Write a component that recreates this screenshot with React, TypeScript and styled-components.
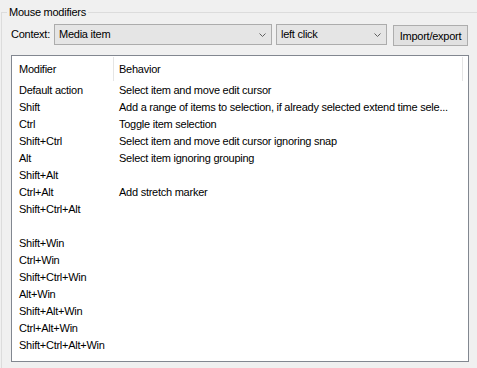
import React from "react";
import styled, { createGlobalStyle } from "styled-components";

const GlobalStyle = createGlobalStyle`
  html, body {
    margin: 0;
    padding: 0;
    background: #f0f0f0;
  }
  body {
    width: 477px;
    height: 368px;
    overflow: hidden;
    font-family: "Liberation Sans", Arial, sans-serif;
    font-size: 11px;
    letter-spacing: -0.25px;
    color: #000;
  }
`;

const Group = styled.fieldset`
  margin: 6px 0 0 1px;
  padding: 5px 0 0 9px;
  width: 476px;
  height: 362px;
  border: 1px solid #dcdcdc;
  border-right: none;
  border-bottom: none;
  box-sizing: border-box;
  min-width: 0;
`;

const Legend = styled.legend`
  margin-left: -4px;
  padding: 0 2px;
  line-height: 13px;
`;

const Toolbar = styled.div`
  display: flex;
  align-items: flex-start;
  height: 21px;
`;

const Label = styled.span`
  width: 43px;
  line-height: 21px;
`;

const Select = styled.div<{ $width: number; $gap?: number }>`
  display: flex;
  align-items: center;
  justify-content: space-between;
  box-sizing: border-box;
  width: ${(p) => p.$width}px;
  height: 21px;
  margin-right: ${(p) => p.$gap ?? 0}px;
  padding: 0 5px 0 4px;
  background: #e5e5e5;
  border: 1px solid #acacac;
  line-height: 19px;
`;

const Button = styled.button`
  box-sizing: border-box;
  width: 75px;
  height: 21px;
  margin-top: 1px;
  padding: 0;
  background: #e1e1e1;
  border: 1px solid #adadad;
  font: inherit;
  letter-spacing: inherit;
  color: #000;
`;

const List = styled.div`
  box-sizing: border-box;
  width: 458px;
  height: 307px;
  margin-top: 10px;
  background: #fff;
  border: 1px solid #828790;
  overflow: hidden;
`;

const HeaderRow = styled.div`
  display: flex;
  padding: 1px 0;
`;

const HeaderCell = styled.div<{ $width: number; $pad: number }>`
  box-sizing: border-box;
  width: ${(p) => p.$width}px;
  padding-left: ${(p) => p.$pad}px;
  height: 24px;
  line-height: 24px;
  border-right: 1px solid #e5e5e5;
`;

const Row = styled.div`
  display: flex;
  height: 17px;
  line-height: 17px;
  white-space: nowrap;
`;

const Cell = styled.div<{ $width: number; $pad: number }>`
  box-sizing: border-box;
  width: ${(p) => p.$width}px;
  padding-left: ${(p) => p.$pad}px;
  overflow: hidden;
`;

const Chevron = () => (
  <svg width="7" height="4" viewBox="0 0 7 4">
    <polyline
      points="0.5,0.5 3.5,3.5 6.5,0.5"
      fill="none"
      stroke="#606060"
      strokeWidth="1"
    />
  </svg>
);

const rows: [string, string][] = [
  ["Default action", "Select item and move edit cursor"],
  ["Shift", "Add a range of items to selection, if already selected extend time sele..."],
  ["Ctrl", "Toggle item selection"],
  ["Shift+Ctrl", "Select item and move edit cursor ignoring snap"],
  ["Alt", "Select item ignoring grouping"],
  ["Shift+Alt", ""],
  ["Ctrl+Alt", "Add stretch marker"],
  ["Shift+Ctrl+Alt", ""],
  ["", ""],
  ["Shift+Win", ""],
  ["Ctrl+Win", ""],
  ["Shift+Ctrl+Win", ""],
  ["Alt+Win", ""],
  ["Shift+Alt+Win", ""],
  ["Ctrl+Alt+Win", ""],
  ["Shift+Ctrl+Alt+Win", ""],
];

export default function App() {
  return (
    <>
      <GlobalStyle />
      <Group>
        <Legend>Mouse modifiers</Legend>
        <Toolbar>
          <Label>Context:</Label>
          <Select $width={218} $gap={4}>
            <span>Media item</span>
            <Chevron />
          </Select>
          <Select $width={111} $gap={6}>
            <span>left click</span>
            <Chevron />
          </Select>
          <Button>Import/export</Button>
        </Toolbar>
        <List>
          <HeaderRow>
            <HeaderCell $width={102} $pad={7}>
              Modifier
            </HeaderCell>
            <HeaderCell $width={349} $pad={5}>
              Behavior
            </HeaderCell>
          </HeaderRow>
          {rows.map(([mod, behavior], i) => (
            <Row key={i}>
              <Cell $width={102} $pad={7}>
                {mod}
              </Cell>
              <Cell $width={349} $pad={5}>
                {behavior}
              </Cell>
            </Row>
          ))}
        </List>
      </Group>
    </>
  );
}
